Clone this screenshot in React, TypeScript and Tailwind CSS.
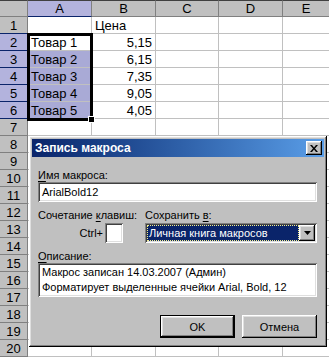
import React from "react";

const SHEET_ROWS: { n: number; a: string; b: string }[] = [
  { n: 1, a: "", b: "Цена" },
  { n: 2, a: "Товар 1", b: "5,15" },
  { n: 3, a: "Товар 2", b: "6,15" },
  { n: 4, a: "Товар 3", b: "7,35" },
  { n: 5, a: "Товар 4", b: "9,05" },
  { n: 6, a: "Товар 5", b: "4,05" },
  ...Array.from({ length: 14 }, (_, i) => ({ n: i + 7, a: "", b: "" })),
];

const raised =
  "shadow-[inset_-1px_-1px_#000,inset_1px_1px_#fff,inset_-2px_-2px_#808080,inset_2px_2px_#dfdfdf]";
const sunken =
  "shadow-[inset_1px_1px_#808080,inset_-1px_-1px_#fff,inset_2px_2px_#404040,inset_-2px_-2px_#dfdfdf]";

function Sheet() {
  return (
    <div className="flex flex-col text-[13px] leading-none">
      <div className="flex h-[17px]">
        <div className="w-[28px] h-full bg-[#c0c0c0] border-t border-r border-b border-t-[#404040] border-r-[#808080] border-b-[#808080]" />
        <div className="w-[64px] h-full bg-[#b3b3dd] border-t border-r border-b border-t-[#404040] border-r-[#808080] border-b-[#0a246a] flex items-center justify-center">A</div>
        <div className="w-[64px] h-full bg-[#c0c0c0] border-t border-r border-b border-t-[#404040] border-r-[#808080] border-b-[#808080] flex items-center justify-center">B</div>
        <div className="w-[63px] h-full bg-[#c0c0c0] border-t border-r border-b border-t-[#404040] border-r-[#808080] border-b-[#808080] flex items-center justify-center">C</div>
        <div className="w-[64px] h-full bg-[#c0c0c0] border-t border-r border-b border-t-[#404040] border-r-[#808080] border-b-[#808080] flex items-center justify-center">D</div>
        <div className="flex-1 h-full bg-[#c0c0c0] border-t border-b border-t-[#404040] border-b-[#808080] flex items-center justify-center">E</div>
      </div>
      {SHEET_ROWS.map((r) => {
        const sel = r.n >= 2 && r.n <= 6;
        const navyBottom = r.n >= 1 && r.n <= 6;
        return (
          <div key={r.n} className="flex h-[17px]">
            <div
              className={
                "w-[28px] h-full border-r border-b border-r-[#808080] flex items-center justify-center " +
                (sel ? "bg-[#b3b3dd] " : "bg-[#c0c0c0] ") +
                (navyBottom ? "border-b-[#0a246a]" : "border-b-[#808080]")
              }
            >
              {r.n}
            </div>
            <div
              className={
                "w-[64px] h-full border-r border-b border-[#c0c0c0] flex items-center pl-[3px] " +
                (sel && r.n !== 2 ? "bg-[#a9aad6]" : "bg-white")
              }
            >
              {r.a}
            </div>
            <div
              className={
                "w-[64px] h-full border-r border-b border-[#c0c0c0] flex items-center px-[3px] " +
                (r.n === 1 ? "justify-start" : "justify-end")
              }
            >
              {r.b}
            </div>
            <div className="w-[63px] h-full border-r border-b border-[#c0c0c0]" />
            <div className="w-[64px] h-full border-r border-b border-[#c0c0c0]" />
            <div className="flex-1 h-full border-b border-[#c0c0c0]" />
          </div>
        );
      })}
      {/* selection outline A2:A6 */}
      <div className="absolute left-[27px] top-[33px] w-[66px] h-[88px] border-[3px] border-black pointer-events-none" />
      <div className="absolute left-[88px] top-[116px] w-[7px] h-[7px] bg-black border border-white pointer-events-none" />
    </div>
  );
}

function U({ children }: { children: React.ReactNode }) {
  return <span className="underline underline-offset-[2px]">{children}</span>;
}

function MacroDialog() {
  return (
    <div
      className={
        "absolute left-[29px] top-[136px] w-[298px] h-[211px] bg-[#c0c0c0] p-[3px] flex flex-col text-[11px] leading-[14px] " +
        raised
      }
    >
      <div className="h-[18px] flex items-center justify-between pl-[3px] pr-[2px] bg-linear-to-r from-[#0a246a] to-[#5a9ee8]">
        <span className="text-white font-bold text-[12px]">Запись макроса</span>
        <div className={"w-[16px] h-[14px] bg-[#c0c0c0] flex items-center justify-center " + raised}>
          <svg width="8" height="7" viewBox="0 0 8 7">
            <path d="M0 0h2l2 2.5L6 0h2L5 3.5 8 7H6L4 4.5 2 7H0l3-3.5z" fill="#000" />
          </svg>
        </div>
      </div>

      <div className="flex flex-col pl-[6px] pr-[7px]">
        <div className="mt-[11px] h-[14px]">
          <U>И</U>мя макроса:
        </div>
        <div className={"h-[20px] bg-white flex items-center px-[4px] " + sunken}>ArialBold12</div>

        <div className="mt-[6px] h-[14px] flex">
          <div className="w-[107px]">
            Сочетание <U>к</U>лавиш:
          </div>
          <div>
            Сохранить <U>в</U>:
          </div>
        </div>
        <div className="mt-[1px] h-[20px] flex">
          <div className="w-[107px] flex items-center justify-end pr-[22px] gap-[2px]">
            <span>Ctrl+</span>
            <div className={"w-[18px] h-[20px] bg-white " + sunken} />
          </div>
          <div className={"flex-1 h-[20px] bg-white flex items-center p-[2px] " + sunken}>
            <div className="flex-1 h-full bg-[#0a246a] border border-dotted border-[#f5f08c] text-white flex items-center px-[1px]">
              Личная книга макросов
            </div>
            <div className={"w-[16px] h-full bg-[#c0c0c0] flex items-center justify-center " + raised}>
              <svg width="7" height="4" viewBox="0 0 7 4">
                <path d="M0 0h7L3.5 4z" fill="#000" />
              </svg>
            </div>
          </div>
        </div>

        <div className="mt-[6px] h-[14px]">
          <U>О</U>писание:
        </div>
        <div className={"h-[34px] bg-white px-[4px] pt-[2px] leading-[15px] " + sunken}>
          <div>Макрос записан 14.03.2007 (Админ)</div>
          <div>Форматирует выделенные ячейки Arial, Bold, 12</div>
        </div>

        <div className="mt-[18px] flex justify-end gap-[7px]">
          <div className="w-[75px] h-[23px] border border-black">
            <div className={"w-full h-full bg-[#c0c0c0] flex items-center justify-center " + raised}>OK</div>
          </div>
          <div className={"w-[75px] h-[23px] bg-[#c0c0c0] flex items-center justify-center " + raised}>Отмена</div>
        </div>
      </div>
    </div>
  );
}

export default function App() {
  return (
    <div className="relative w-[329px] h-[357px] overflow-hidden bg-white text-black font-['Liberation_Sans',Arial,sans-serif]">
      <Sheet />
      <MacroDialog />
    </div>
  );
}
